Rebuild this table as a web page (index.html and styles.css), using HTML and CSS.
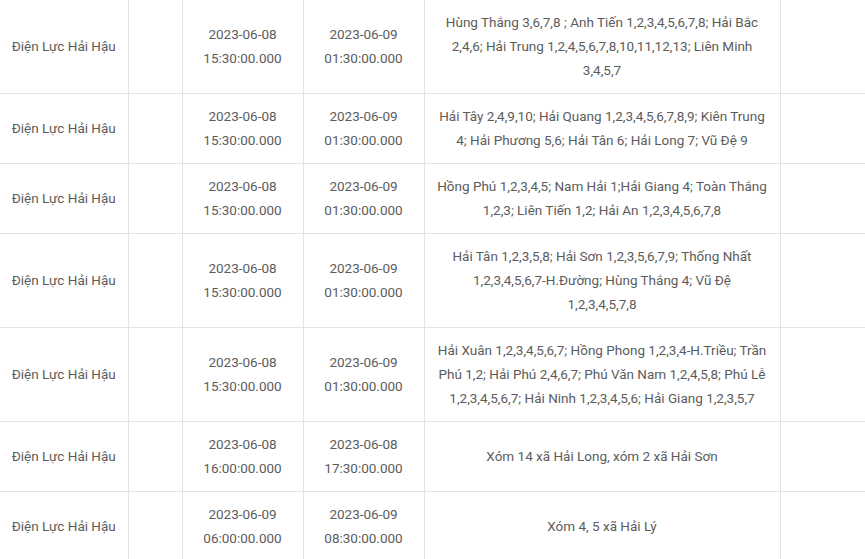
FILE: index.html
```html
<!DOCTYPE html>
<html lang="vi">
<head>
<meta charset="utf-8">
<title>Lịch cắt điện</title>
<link rel="stylesheet" href="styles.css">
</head>
<body>
<table class="schedule">
  <colgroup>
    <col class="c-unit"><col class="c-empty"><col class="c-date"><col class="c-date"><col class="c-area"><col class="c-last">
  </colgroup>
  <tbody>
    <tr>
      <td>Điện Lực Hải Hậu</td><td></td>
      <td>2023-06-08<br>15:30:00.000</td><td>2023-06-09<br>01:30:00.000</td>
      <td>Hùng Thắng 3,6,7,8 ; Anh Tiến 1,2,3,4,5,6,7,8; Hải Bắc<br>2,4,6; Hải Trung 1,2,4,5,6,7,8,10,11,12,13; Liên Minh<br>3,4,5,7</td><td></td>
    </tr>
    <tr>
      <td>Điện Lực Hải Hậu</td><td></td>
      <td>2023-06-08<br>15:30:00.000</td><td>2023-06-09<br>01:30:00.000</td>
      <td>Hải Tây 2,4,9,10; Hải Quang 1,2,3,4,5,6,7,8,9; Kiên Trung<br>4; Hải Phương 5,6; Hải Tân 6; Hải Long 7; Vũ Đệ 9</td><td></td>
    </tr>
    <tr>
      <td>Điện Lực Hải Hậu</td><td></td>
      <td>2023-06-08<br>15:30:00.000</td><td>2023-06-09<br>01:30:00.000</td>
      <td>Hồng Phú 1,2,3,4,5; Nam Hải 1;Hải Giang 4; Toàn Thắng<br>1,2,3; Liên Tiến 1,2; Hải An 1,2,3,4,5,6,7,8</td><td></td>
    </tr>
    <tr>
      <td>Điện Lực Hải Hậu</td><td></td>
      <td>2023-06-08<br>15:30:00.000</td><td>2023-06-09<br>01:30:00.000</td>
      <td>Hải Tân 1,2,3,5,8; Hải Sơn 1,2,3,5,6,7,9; Thống Nhất<br>1,2,3,4,5,6,7-H.Đường; Hùng Thắng 4; Vũ Đệ<br>1,2,3,4,5,7,8</td><td></td>
    </tr>
    <tr>
      <td>Điện Lực Hải Hậu</td><td></td>
      <td>2023-06-08<br>15:30:00.000</td><td>2023-06-09<br>01:30:00.000</td>
      <td>Hải Xuân 1,2,3,4,5,6,7; Hồng Phong 1,2,3,4-H.Triều; Trần<br>Phú 1,2; Hải Phú 2,4,6,7; Phú Văn Nam 1,2,4,5,8; Phú Lễ<br>1,2,3,4,5,6,7; Hải Ninh 1,2,3,4,5,6; Hải Giang 1,2,3,5,7</td><td></td>
    </tr>
    <tr>
      <td>Điện Lực Hải Hậu</td><td></td>
      <td>2023-06-08<br>16:00:00.000</td><td>2023-06-08<br>17:30:00.000</td>
      <td>Xóm 14 xã Hải Long, xóm 2 xã Hải Sơn</td><td></td>
    </tr>
    <tr>
      <td>Điện Lực Hải Hậu</td><td></td>
      <td>2023-06-09<br>06:00:00.000</td><td>2023-06-09<br>08:30:00.000</td>
      <td>Xóm 4, 5 xã Hải Lý</td><td></td>
    </tr>
  </tbody>
</table>
</body>
</html>
```

FILE: styles.css
```css
html, body {
  margin: 0;
  padding: 0;
  background: #ffffff;
}
body {
  font-family: Roboto, "Noto Sans", sans-serif;
  font-size: 13.5px;
  color: #5c5c5c;
}
.schedule {
  border-collapse: collapse;
  table-layout: fixed;
  width: 880px;
}
.c-unit { width: 128px; }
.c-empty { width: 54px; }
.c-date { width: 121px; }
.c-area { width: 356px; }
.c-last { width: 100px; }
.schedule td {
  border: 1px solid #e3e3e3;
  padding: 10px 8px 11px;
  line-height: 24px;
  text-align: center;
  vertical-align: middle;
}
.schedule tr:first-child td { border-top: none; }
.schedule td:first-child { border-left: none; }
```
